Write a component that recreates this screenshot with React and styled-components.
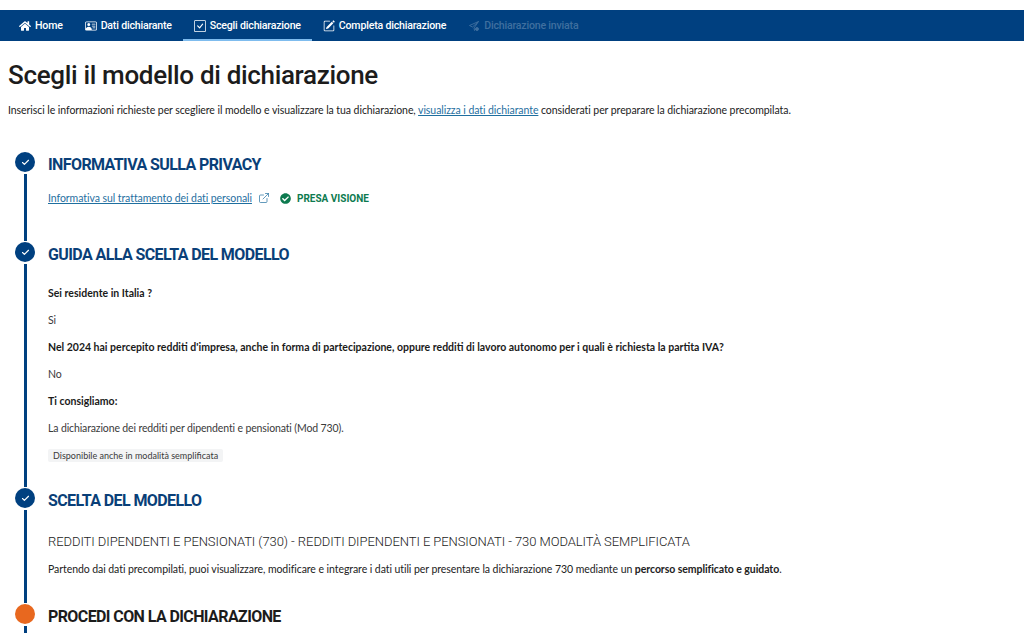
import React from 'react';
import styled, { createGlobalStyle } from 'styled-components';
import { FaHome, FaCheckCircle } from 'react-icons/fa';
import { BsPersonVcard, BsPencilSquare, BsCheckSquare } from 'react-icons/bs';
import { ExternalLink, Check } from 'lucide-react';

const GlobalStyle = createGlobalStyle`
  html, body {
    margin: 0;
    padding: 0;
    background: #fff;
    overflow: hidden;
  }
  body {
    font-family: "Lato", "Noto Sans", sans-serif;
    color: #222;
    font-size: 10.5px;
    letter-spacing: -0.065px;
  }
`;

const headFont = `"Roboto", "Lato", sans-serif`;

const Page = styled.div`
  width: 1024px;
  height: 633px;
  padding-top: 10px;
  box-sizing: border-box;
  overflow: hidden;
`;

const Nav = styled.nav`
  height: 31px;
  background: #004080;
  display: flex;
  padding-left: 8px;
`;

const NavItem = styled.a`
  display: flex;
  align-items: center;
  gap: 4px;
  padding: 2px 11px 0;
  font-family: ${headFont};
  font-size: 10.6px;
  font-weight: 500;
  letter-spacing: -0.2px;
  color: ${(p) => (p.$disabled ? '#3f6f9f' : '#fff')};
  border-bottom: 2px solid ${(p) => (p.$active ? '#7fbcee' : 'transparent')};
`;

const Content = styled.main`
  padding: 0 8px;
`;

const Title = styled.h1`
  margin: 18px 0 0;
  font-family: ${headFont};
  font-size: 26px;
  line-height: 32px;
  font-weight: 500;
  letter-spacing: -0.33px;
  color: #1c1c1c;
`;

const Intro = styled.p`
  margin: 12px 0 0;
  line-height: 14px;
`;

const TextLink = styled.a`
  color: #1f6f9f;
  text-decoration: underline;
`;

const Steps = styled.div`
  margin: 35px 0 0 7px;
`;

const Step = styled.section`
  display: grid;
  grid-template-columns: 20px 1fr;
  column-gap: 13px;
  height: ${(p) => p.$height}px;
`;

const Marker = styled.div`
  display: flex;
  flex-direction: column;
  align-items: center;
  gap: 2px;
  padding-bottom: 1px;
`;

const Dot = styled.div`
  width: 20px;
  height: 20px;
  flex: none;
  border-radius: 50%;
  background: ${(p) => (p.$current ? '#e8681f' : '#004080')};
  color: #fff;
  display: flex;
  align-items: center;
  justify-content: center;
`;

const Line = styled.div`
  width: 3px;
  flex: 1;
  background: #004080;
`;

const Heading = styled.h2`
  margin: 0;
  padding-top: 3px;
  font-family: ${headFont};
  font-size: 16px;
  line-height: 20px;
  font-weight: 700;
  letter-spacing: -0.6px;
  color: ${(p) => (p.$current ? '#1c1c1c' : '#0a3f78')};
  text-transform: uppercase;
`;

const PrivacyRow = styled.div`
  margin-top: 16px;
  display: flex;
  align-items: center;
  height: 14px;
`;

const LinkIcon = styled.span`
  display: inline-flex;
  margin-left: 6px;
  color: #1f6f9f;
`;

const Seen = styled.span`
  display: inline-flex;
  align-items: center;
  gap: 6px;
  margin-left: 10px;
  color: #0d7a4f;
  font-family: ${headFont};
  font-weight: 700;
  font-size: 10px;
  letter-spacing: 0;
`;

const Answers = styled.div`
  margin-top: 21px;
`;

const Para = styled.p`
  margin: 0 0 13px;
  line-height: 14px;
  font-weight: ${(p) => (p.$bold ? 700 : 400)};
  letter-spacing: ${(p) => (p.$bold ? '0' : '-0.13px')};
  color: ${(p) => (p.$bold ? '#1a1a1a' : '#3a3a3a')};
`;

const Tag = styled.span`
  display: inline-block;
  margin-top: 1px;
  padding: 0 5px;
  font-size: 9px;
  line-height: 13px;
  letter-spacing: 0;
  color: #3a3a3a;
  background: #f3f4f5;
  border-radius: 2px;
`;

const ModelName = styled.p`
  margin: 22px 0 0;
  font-family: ${headFont};
  font-size: 13px;
  font-weight: 300;
  line-height: 18px;
  letter-spacing: -0.07px;
  color: #222;
`;

const ModelNote = styled.p`
  margin: 11px 0 0;
  line-height: 14px;
`;

const SendIcon = () => (
  <svg width="12" height="12" viewBox="0 0 24 24" fill="none" stroke="currentColor" strokeWidth="1.8">
    <path d="M21 3 3 11l6 3 12-11-9 13 1 5 3-4" />
    <circle cx="18" cy="18" r="3" fill="currentColor" />
  </svg>
);

const StepMarker = ({ current }) => (
  <Marker>
    <Dot $current={current}>{!current && <Check size={9} strokeWidth={3} />}</Dot>
    <Line />
  </Marker>
);

export default function App() {
  return (
    <Page>
      <GlobalStyle />
      <Nav>
        <NavItem><FaHome size={12} />Home</NavItem>
        <NavItem><BsPersonVcard size={12} />Dati dichiarante</NavItem>
        <NavItem $active><BsCheckSquare size={12} />Scegli dichiarazione</NavItem>
        <NavItem><BsPencilSquare size={12} />Completa dichiarazione</NavItem>
        <NavItem $disabled><SendIcon />Dichiarazione inviata</NavItem>
      </Nav>
      <Content>
        <Title>Scegli il modello di dichiarazione</Title>
        <Intro>
          Inserisci le informazioni richieste per scegliere il modello e visualizzare la tua dichiarazione,{' '}
          <TextLink>visualizza i dati dichiarante</TextLink> considerati per preparare la dichiarazione precompilata.
        </Intro>
        <Steps>
          <Step $height={90}>
            <StepMarker />
            <div>
              <Heading>Informativa sulla privacy</Heading>
              <PrivacyRow>
                <TextLink>Informativa sul trattamento dei dati personali</TextLink>
                <LinkIcon><ExternalLink size={12} strokeWidth={1.4} /></LinkIcon>
                <Seen><FaCheckCircle size={11} />PRESA VISIONE</Seen>
              </PrivacyRow>
            </div>
          </Step>
          <Step $height={246}>
            <StepMarker />
            <div>
              <Heading>Guida alla scelta del modello</Heading>
              <Answers>
                <Para $bold>Sei residente in Italia ?</Para>
                <Para>Si</Para>
                <Para $bold>Nel 2024 hai percepito redditi d'impresa, anche in forma di partecipazione, oppure redditi di lavoro autonomo per i quali è richiesta la partita IVA?</Para>
                <Para>No</Para>
                <Para $bold>Ti consigliamo:</Para>
                <Para>La dichiarazione dei redditi per dipendenti e pensionati (Mod 730).</Para>
                <Tag>Disponibile anche in modalità semplificata</Tag>
              </Answers>
            </div>
          </Step>
          <Step $height={116}>
            <StepMarker />
            <div>
              <Heading>Scelta del modello</Heading>
              <ModelName>REDDITI DIPENDENTI E PENSIONATI (730) - REDDITI DIPENDENTI E PENSIONATI - 730 MODALITÀ SEMPLIFICATA</ModelName>
              <ModelNote>
                Partendo dai dati precompilati, puoi visualizzare, modificare e integrare i dati utili per presentare la dichiarazione 730 mediante un <b>percorso semplificato e guidato</b>.
              </ModelNote>
            </div>
          </Step>
          <Step $height={60}>
            <StepMarker current />
            <div>
              <Heading $current>Procedi con la dichiarazione</Heading>
            </div>
          </Step>
        </Steps>
      </Content>
    </Page>
  );
}
